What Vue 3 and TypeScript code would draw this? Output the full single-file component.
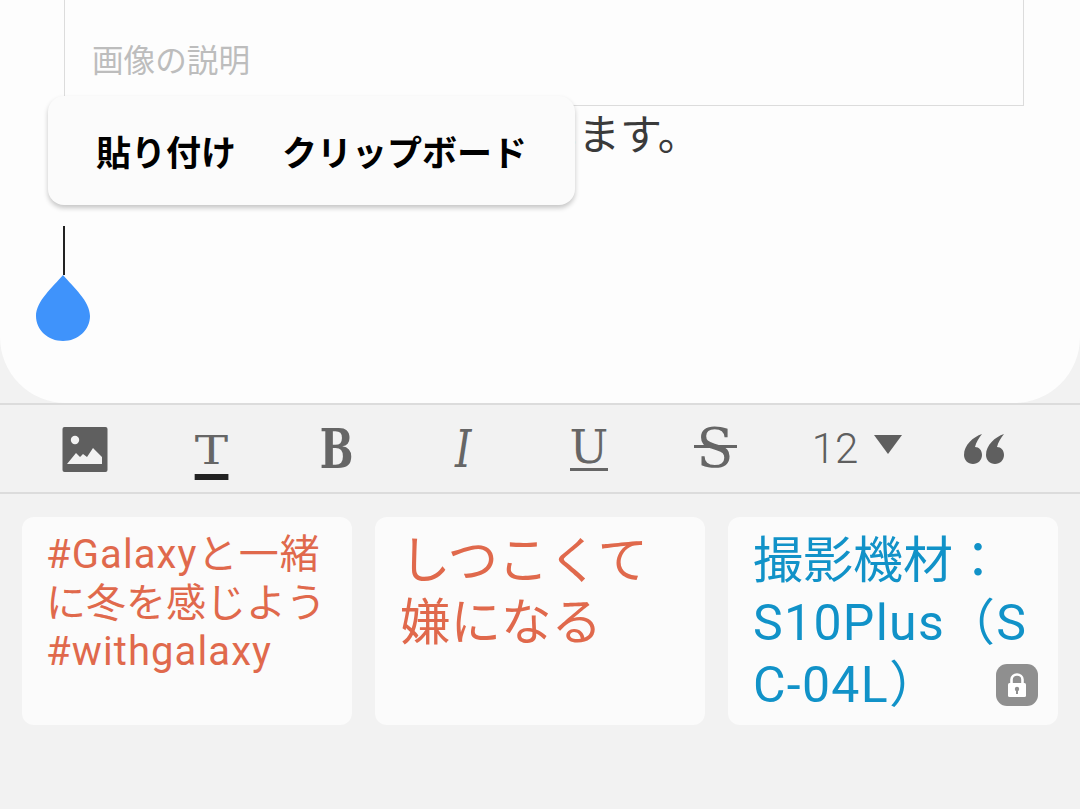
<script setup lang="ts">
const tools = [
  { label: 'T', cls: 'tool-t' },
  { label: 'B', cls: 'tool-b' },
  { label: 'I', cls: 'tool-i' },
  { label: 'U', cls: 'tool-u' },
  { label: 'S', cls: 'tool-s' },
]
const clips = [
  { cls: 'clip-small', lines: ['#Galaxyと一緒', 'に冬を感じよう', '#withgalaxy'], locked: false },
  { cls: 'clip-large', lines: ['しつこくて', '嫌になる'], locked: false },
  { cls: 'clip-blue', lines: ['撮影機材：', 'S10Plus（S', 'C-04L）'], locked: true },
]
</script>

<template>
  <div class="screen">
    <section class="editor">
      <div class="image-box">
        <span class="caption">画像の説明</span>
      </div>
      <p class="body-line">います。</p>

      <div class="popup">
        <span>貼り付け</span>
        <span>クリップボード</span>
      </div>
      <div class="caret"></div>
      <svg class="handle" width="54" height="66" viewBox="0 0 54 66">
        <path d="M27 0C37 12 54 26 54 41C54 55 42 66 27 66C12 66 0 55 0 41C0 26 17 12 27 0Z" fill="#3f93fb" />
      </svg>
    </section>

    <nav class="toolbar">
      <div class="tool">
        <svg width="46" height="46" viewBox="0 0 46 46">
          <rect x="0.5" y="1" width="45" height="45" rx="2" fill="#5f5f5f" />
          <circle cx="13" cy="14" r="4.2" fill="#f2f2f2" />
          <path d="M5 38L14 27L18 31L21 28L25 31L31 22L40 31V38Z" fill="#f2f2f2" />
        </svg>
      </div>
      <div v-for="t in tools" :key="t.label" class="tool">
        <span class="glyph" :class="t.cls">{{ t.label }}</span>
      </div>
      <div class="tool size">
        <span class="size-num">12</span>
        <span class="size-arrow"></span>
      </div>
      <div class="tool quote">
        <svg width="40" height="30" viewBox="0 0 40 30">
          <path d="M18 0C9 3 0 11 0 21C0 26 4 30 9 30C14 30 18 26 18 21C18 16 15 13 11 13C12 8 15 4 18 0Z" fill="#5f5f5f" />
          <path d="M40 0C31 3 22 11 22 21C22 26 26 30 31 30C36 30 40 26 40 21C40 16 37 13 33 13C34 8 37 4 40 0Z" fill="#5f5f5f" />
        </svg>
      </div>
    </nav>

    <div class="clips">
      <div v-for="c in clips" :key="c.cls" class="clip" :class="c.cls">
        <div v-for="line in c.lines" :key="line" class="clip-line">{{ line }}</div>
        <span v-if="c.locked" class="lock">
          <svg width="24" height="26" viewBox="0 0 24 26">
            <path d="M6.5 12V7.5C6.5 4.5 9 2.5 12 2.5C15 2.5 17.5 4.5 17.5 7.5V12" fill="none" stroke="#fff" stroke-width="2.6" />
            <rect x="3" y="11" width="18" height="14" rx="1.5" fill="#fff" />
            <circle cx="12" cy="17" r="2.2" fill="#8f8f8f" />
            <rect x="11" y="17" width="2" height="5" fill="#8f8f8f" />
          </svg>
        </span>
      </div>
    </div>
  </div>
</template>

<style>
html, body { margin: 0; background: #f2f2f2; }
</style>

<style scoped>
.screen {
  width: 1080px;
  height: 809px;
  overflow: hidden;
  background: #f2f2f2;
  font-family: Roboto, "Noto Sans CJK JP", sans-serif;
}
.editor {
  position: relative;
  height: 403px;
  box-sizing: border-box;
  background: #fdfdfd;
  border-radius: 0 0 66px 66px;
}
.image-box {
  height: 106px;
  margin: 0 56px 0 64px;
  box-sizing: border-box;
  padding: 40px 0 0 27px;
  border: 1px solid #dcdcdc;
  border-top: none;
}
.caption {
  display: block;
  font-size: 31.6px;
  line-height: 44px;
  color: #bdbdbd;
}
.body-line {
  margin: 5px 0 0 536px;
  font-size: 42px;
  line-height: 50px;
  color: #3a3a3a;
  white-space: nowrap;
}
.popup {
  position: absolute;
  left: 48px;
  top: 96px;
  width: 527px;
  height: 109px;
  box-sizing: border-box;
  padding: 0 48px;
  display: flex;
  align-items: center;
  justify-content: space-between;
  background: #fbfbfb;
  border-radius: 16px;
  box-shadow: 0 3px 5px rgba(0, 0, 0, 0.22);
  font-size: 35px;
  font-weight: 700;
  color: #000;
  white-space: nowrap;
}
.caret {
  position: absolute;
  left: 63px;
  top: 226px;
  width: 2px;
  height: 49px;
  background: #222;
}
.handle {
  position: absolute;
  left: 36px;
  top: 275px;
}
.toolbar {
  height: 91px;
  box-sizing: border-box;
  padding-left: 22px;
  display: grid;
  grid-template-columns: repeat(8, 126px);
  border-top: 2px solid #dcdcdc;
  border-bottom: 2px solid #dcdcdc;
}
.tool {
  display: flex;
  align-items: center;
  justify-content: center;
}
.glyph {
  font-family: "DejaVu Serif", serif;
  color: #666;
  line-height: 1;
  position: relative;
}
.tool-t {
  font-size: 40px;
  line-height: 36px;
  padding-bottom: 6px;
  margin-top: 14px;
  border-bottom: 6px solid #222;
  transform: scaleX(1.25);
}
.tool-b {
  font-family: "DejaVu Serif Condensed", "DejaVu Serif", serif;
  font-size: 54px;
  font-weight: 700;
  transform: scaleX(0.82);
}
.tool-i { font-size: 52px; font-style: italic; transform: scaleX(0.8); }
.tool-u {
  font-size: 46px;
  line-height: 42px;
  border-bottom: 3px solid #666;
}
.tool-s { font-size: 54px; font-weight: 400; }
.tool-s::after {
  content: "";
  position: absolute;
  left: -3px;
  right: -3px;
  top: 23px;
  height: 3px;
  background: #666;
}
.size { gap: 16px; padding-left: 32px; }
.size-num {
  font-size: 42px;
  font-weight: 300;
  color: #5f5f5f;
}
.size-arrow {
  width: 0;
  height: 0;
  margin-top: -8px;
  border-left: 14px solid transparent;
  border-right: 14px solid transparent;
  border-top: 19px solid #5f5f5f;
}
.quote { padding-left: 34px; }
.clips {
  display: grid;
  grid-template-columns: repeat(3, 330px);
  gap: 23px;
  padding: 23px 0 0 22px;
}
.clip {
  position: relative;
  height: 208px;
  box-sizing: border-box;
  background: #fbfbfb;
  border-radius: 12px;
  white-space: nowrap;
}
.clip-small {
  padding: 14px 0 0 24px;
  font-size: 40px;
  line-height: 48.5px;
  color: #e0694c;
}
.clip-small .clip-line:nth-child(odd) { letter-spacing: 1.1px; }
.clip-large {
  padding: 13px 0 0 25px;
  font-size: 50.5px;
  line-height: 62px;
  color: #e0694c;
}
.clip-blue {
  padding: 13px 0 0 25px;
  font-size: 50px;
  line-height: 62px;
  color: #1192c8;
}
.clip-blue .clip-line + .clip-line { letter-spacing: 1.3px; }
.lock {
  position: absolute;
  right: 20px;
  bottom: 19px;
  width: 42px;
  height: 42px;
  display: flex;
  align-items: center;
  justify-content: center;
  background: #8f8f8f;
  border-radius: 11px;
}
</style>
